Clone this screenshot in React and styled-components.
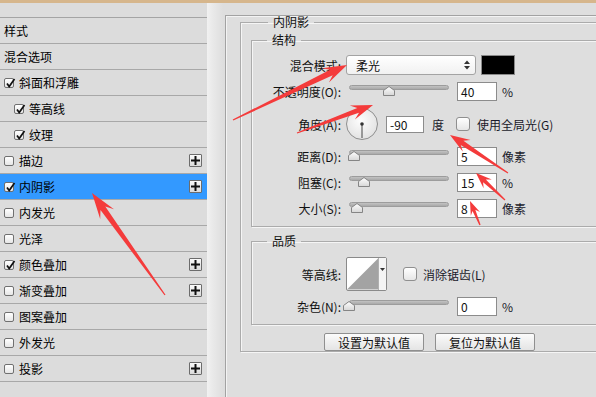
import React from 'react';
import styled, { createGlobalStyle } from 'styled-components';

const GlobalStyle = createGlobalStyle`
  html, body { margin: 0; padding: 0; background: #dedede; }
  body {
    font-family: "Noto Sans CJK SC", "Noto Sans", sans-serif;
    font-size: 12px;
    color: #111;
  }
`;

const Window = styled.div`
  position: relative;
  width: 596px;
  height: 397px;
  overflow: hidden;
  box-sizing: border-box;
  border-top: 3px solid #d6b68c;
  background: #dedede;
  display: flex;
`;

/* ---------- left list ---------- */

const LeftCol = styled.div`
  width: 207px;
  flex-shrink: 0;
  padding-top: 14px;
  background: #dcdcdc;
`;

const List = styled.div`
  border-top: 1px solid #a4a4a4;
`;

const Item = styled.div`
  display: flex;
  align-items: center;
  height: 26px;
  box-sizing: border-box;
  border-bottom: 1px solid #a8a8a8;
  padding-left: ${p => (p.$indent ? 14 : 4)}px;
  padding-right: 5px;
  background: ${p => (p.$active ? '#3399ff' : '#dcdcdc')};
  color: #000;
`;

const ItemText = styled.span`
  margin-left: ${p => (p.$box ? 5 : 0)}px;
  line-height: 14px;
`;

const SmallBox = styled.div`
  width: 10px;
  height: 10px;
  box-sizing: border-box;
  border: 1px solid #707070;
  border-radius: 2px;
  background: linear-gradient(#ffffff, #e6e6e6);
  position: relative;
  flex-shrink: 0;
  svg { position: absolute; left: 0; top: -2px; }
`;

const PlusBtn = styled.div`
  margin-left: auto;
  width: 13px;
  height: 13px;
  box-sizing: border-box;
  border: 1px solid #6c6c6c;
  border-radius: 1px;
  background: linear-gradient(#fbfbfb, #dadada);
  display: flex;
  align-items: center;
  justify-content: center;
`;

const Gutter = styled.div`
  width: 18px;
  flex-shrink: 0;
  background: linear-gradient(to right, #f1f1f1 0, #e9e9e9 6px, #dedede 16px);
`;

/* ---------- right panel ---------- */

const RightPanel = styled.div`
  width: 400px;
  flex-shrink: 0;
  margin-top: 12px;
  border-left: 1px solid #a2a2a2;
  border-top: 1px solid #a2a2a2;
  padding-left: 14px;
  box-shadow: inset 1px 1px 0 #f3f3f3;
`;

const Group = styled.fieldset`
  margin: ${p => p.$mt || 0}px 0 0 0;
  padding: ${p => p.$pad};
  border: 1px solid #ababab;
  box-shadow: inset 1px 1px 0 #f5f5f5, 1px 1px 0 #f5f5f5;
  min-width: 0;
`;

const Legend = styled.legend`
  margin-left: ${p => p.$ml}px;
  padding: 0 5px;
  font-size: 12px;
  line-height: 12px;
  color: #111;
`;

const Row = styled.div`
  display: flex;
  align-items: center;
  height: ${p => p.$h}px;
`;

const Label = styled.div`
  width: 89px;
  flex-shrink: 0;
  text-align: right;
  white-space: nowrap;
  margin-right: 5px;
  color: #111;
`;

const Select = styled.div`
  width: 130px;
  height: 20px;
  box-sizing: border-box;
  border: 1px solid #a3a3a3;
  border-radius: 3px;
  background: linear-gradient(#ffffff, #f1f1f1);
  display: flex;
  align-items: center;
  justify-content: space-between;
  padding: 0 5px 0 9px;
`;

const Swatch = styled.div`
  margin-left: 5px;
  width: 34px;
  height: 20px;
  box-sizing: border-box;
  border: 1px solid #8a8a8a;
  background: #000;
`;

const SliderBox = styled.div`
  position: relative;
  width: 106px;
  height: 12px;
  flex-shrink: 0;
`;

const Track = styled.div`
  position: absolute;
  left: 3px;
  top: 0;
  width: 100px;
  height: 5px;
  box-sizing: border-box;
  border: 1px solid #9c9c9c;
  border-radius: 3px;
  background: linear-gradient(#c2c2c2, #a9a9a9);
`;

const Thumb = styled.svg`
  position: absolute;
  top: 1px;
`;

const Field = styled.div`
  margin-left: ${p => (p.$ml === undefined ? 5 : p.$ml)}px;
  width: ${p => p.$w || 40}px;
  height: ${p => p.$h || 19}px;
  box-sizing: border-box;
  border: 1px solid #8c8c8c;
  background: #fff;
  padding-left: 3px;
  display: flex;
  align-items: center;
  color: #111;
  flex-shrink: 0;
`;

const Unit = styled.span`
  margin-left: ${p => (p.$ml === undefined ? 5 : p.$ml)}px;
  color: #1a1a2a;
  white-space: nowrap;
`;

const BigBox = styled.div`
  margin-left: ${p => p.$ml}px;
  width: 14px;
  height: 14px;
  box-sizing: border-box;
  border: 1px solid #8f8f8f;
  border-radius: 3px;
  background: linear-gradient(#ffffff, #e6e6e6);
  flex-shrink: 0;
`;

const Contour = styled.div`
  width: 41px;
  height: 34px;
  box-sizing: border-box;
  border: 1px solid #8a8a8a;
  border-radius: 2px;
  background: #fff;
  display: flex;
  flex-shrink: 0;
`;

const ContourDrop = styled.div`
  width: 8px;
  border-left: 1px solid #b0b0b0;
  background: #f4f4f4;
  display: flex;
  justify-content: center;
  padding-top: 10px;
  box-sizing: border-box;
`;

const ButtonRow = styled.div`
  display: flex;
  gap: 11px;
  margin: 8px 0 0 73px;
`;

const Button = styled.div`
  width: 100px;
  height: 18px;
  box-sizing: border-box;
  border: 1px solid #8f8f8f;
  border-radius: 2px;
  background: linear-gradient(#fbfbfb, #e4e4e4);
  display: flex;
  align-items: center;
  justify-content: center;
  color: #111;
  font-size: 12px;
`;

const Overlay = styled.svg`
  position: absolute;
  left: 0;
  top: 0;
  pointer-events: none;
`;

/* ---------- small drawings ---------- */

const Check = () => (
  <svg width="11" height="12" viewBox="0 0 11 12">
    <path d="M2 6.5 L4.2 9.5 L9.5 2" fill="none" stroke="#111" strokeWidth="1.7" />
  </svg>
);

const Plus = () => (
  <svg width="9" height="9" viewBox="0 0 9 9">
    <rect x="0" y="3.5" width="9" height="2" fill="#111" />
    <rect x="3.5" y="0" width="2" height="9" fill="#111" />
  </svg>
);

const Slider = ({ value }) => (
  <SliderBox>
    <Track />
    <Thumb width="12" height="10" viewBox="0 0 12 10" style={{ left: 3 + value - 6 }}>
      <defs>
        <linearGradient id="tg" x1="0" y1="0" x2="0" y2="1">
          <stop offset="0" stopColor="#ffffff" />
          <stop offset="1" stopColor="#d6d6d6" />
        </linearGradient>
      </defs>
      <path d="M6 0.5 L11.5 4.5 L11.5 9.5 L0.5 9.5 L0.5 4.5 Z" fill="url(#tg)" stroke="#858585" />
    </Thumb>
  </SliderBox>
);

const Dial = () => (
  <svg width="32" height="32" viewBox="0 0 32 32" style={{ flexShrink: 0 }}>
    <defs>
      <radialGradient id="dg" cx="0.45" cy="0.4" r="0.6">
        <stop offset="0" stopColor="#fdfdfd" />
        <stop offset="1" stopColor="#e2e2e2" />
      </radialGradient>
    </defs>
    <circle cx="16" cy="16" r="15.5" fill="url(#dg)" stroke="#8e8e8e" />
    <line x1="16" y1="16" x2="16" y2="30" stroke="#444" strokeWidth="1" />
    <circle cx="16" cy="16" r="1.8" fill="#333" />
  </svg>
);

const SelectArrow = () => (
  <svg width="6" height="10" viewBox="0 0 6 10">
    <path d="M0 4 L3 0.5 L6 4 Z" fill="#333" />
    <path d="M0 6 L3 9.5 L6 6 Z" fill="#333" />
  </svg>
);

function arrowPath([x1, y1], [x2, y2], hl, hw, sw) {
  const dx = x2 - x1;
  const dy = y2 - y1;
  const len = Math.hypot(dx, dy);
  const ux = dx / len;
  const uy = dy / len;
  const nx = -uy;
  const ny = ux;
  const bx = x2 - ux * hl;
  const by = y2 - uy * hl;
  const ix = x2 - ux * hl * 0.72;
  const iy = y2 - uy * hl * 0.72;
  const pts = [
    [x1 + nx * 0.6, y1 + ny * 0.6],
    [ix + (nx * sw) / 2, iy + (ny * sw) / 2],
    [bx + (nx * hw) / 2, by + (ny * hw) / 2],
    [x2, y2],
    [bx - (nx * hw) / 2, by - (ny * hw) / 2],
    [ix - (nx * sw) / 2, iy - (ny * sw) / 2],
    [x1 - nx * 0.6, y1 - ny * 0.6],
  ];
  return 'M' + pts.map(p => p[0].toFixed(1) + ' ' + p[1].toFixed(1)).join(' L') + ' Z';
}

const arrows = [
  { from: [233, 117], to: [347, 62], hl: 24, hw: 16, sw: 6 },
  { from: [297, 130], to: [373, 102], hl: 22, hw: 15, sw: 5 },
  { from: [508, 170], to: [450, 132], hl: 20, hw: 14, sw: 5 },
  { from: [505, 197], to: [476, 170], hl: 16, hw: 12, sw: 4 },
  { from: [480, 222], to: [470, 198], hl: 14, hw: 10, sw: 3 },
  { from: [165, 292], to: [92, 190], hl: 26, hw: 17, sw: 6 },
];

const layers = [
  { label: '样式' },
  { label: '混合选项' },
  { label: '斜面和浮雕', box: true, checked: true },
  { label: '等高线', box: true, checked: true, indent: true },
  { label: '纹理', box: true, checked: true, indent: true },
  { label: '描边', box: true, plus: true },
  { label: '内阴影', box: true, checked: true, plus: true, active: true },
  { label: '内发光', box: true },
  { label: '光泽', box: true },
  { label: '颜色叠加', box: true, checked: true, plus: true },
  { label: '渐变叠加', box: true, plus: true },
  { label: '图案叠加', box: true },
  { label: '外发光', box: true },
  { label: '投影', box: true, plus: true },
];

export default function App() {
  return (
    <>
      <GlobalStyle />
      <Window>
        <LeftCol>
          <List>
            {layers.map(l => (
              <Item key={l.label} $indent={l.indent} $active={l.active}>
                {l.box && <SmallBox>{l.checked && <Check />}</SmallBox>}
                <ItemText $box={l.box}>{l.label}</ItemText>
                {l.plus && <PlusBtn><Plus /></PlusBtn>}
              </Item>
            ))}
          </List>
        </LeftCol>
        <Gutter />
        <RightPanel>
          <Group $pad="0 0 0 10px">
            <Legend $ml={17}>内阴影</Legend>
            <Group $mt={6} $pad="7px 0 5px 0">
              <Legend $ml={15}>结构</Legend>
              <Row $h={24}>
                <Label>混合模式:</Label>
                <Select>
                  <span>柔光</span>
                  <SelectArrow />
                </Select>
                <Swatch />
              </Row>
              <Row $h={28}>
                <Label>不透明度(O):</Label>
                <Slider value={40} />
                <Field>40</Field>
                <Unit>%</Unit>
              </Row>
              <Row $h={38}>
                <Label>角度(A):</Label>
                <Dial />
                <Field $ml={8} $w={38} $h={17}>-90</Field>
                <Unit $ml={8}>度</Unit>
                <BigBox $ml={12} />
                <Unit $ml={7}>使用全局光(G)</Unit>
              </Row>
              <Row $h={26}>
                <Label>距离(D):</Label>
                <Slider value={5} />
                <Field>5</Field>
                <Unit>像素</Unit>
              </Row>
              <Row $h={26}>
                <Label>阻塞(C):</Label>
                <Slider value={15} />
                <Field>15</Field>
                <Unit>%</Unit>
              </Row>
              <Row $h={26}>
                <Label>大小(S):</Label>
                <Slider value={8} />
                <Field>8</Field>
                <Unit>像素</Unit>
              </Row>
            </Group>
            <Group $mt={8} $pad="8px 0 5px 0">
              <Legend $ml={15}>品质</Legend>
              <Row $h={38}>
                <Label>等高线:</Label>
                <Contour>
                  <svg width="32" height="32" viewBox="0 0 32 32">
                    <path d="M0 32 L32 0 L32 32 Z" fill="#a3a3a3" />
                  </svg>
                  <ContourDrop>
                    <svg width="5" height="3" viewBox="0 0 5 3">
                      <path d="M0 0 L5 0 L2.5 3 Z" fill="#333" />
                    </svg>
                  </ContourDrop>
                </Contour>
                <BigBox $ml={16} />
                <Unit $ml={6}>消除锯齿(L)</Unit>
              </Row>
              <Row $h={26}>
                <Label>杂色(N):</Label>
                <Slider value={0} />
                <Field>0</Field>
                <Unit>%</Unit>
              </Row>
            </Group>
            <ButtonRow>
              <Button>设置为默认值</Button>
              <Button>复位为默认值</Button>
            </ButtonRow>
          </Group>
        </RightPanel>
        <Overlay width="596" height="397" viewBox="0 0 596 397">
          {arrows.map((a, i) => (
            <path key={i} d={arrowPath(a.from, a.to, a.hl, a.hw, a.sw)} fill="#f43b3b" />
          ))}
        </Overlay>
      </Window>
    </>
  );
}
